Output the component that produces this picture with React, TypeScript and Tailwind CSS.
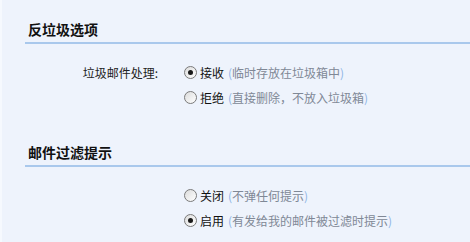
import React from 'react';

type Opt = { label: string; hint: string; checked: boolean };

function Radio({ checked }: { checked: boolean }) {
  return (
    <span className="relative inline-flex h-[13px] w-[13px] shrink-0 items-center justify-center rounded-full border border-[#7a7a7a] bg-gradient-to-br from-[#dcdcdc] to-white">
      {checked && <span className="h-[5px] w-[5px] rounded-full bg-[#1a1a1a]" />}
    </span>
  );
}

function Section({ title, label, options }: { title: string; label: string; options: Opt[] }) {
  return (
    <div>
      <div className="flex h-[24px] items-end border-b-2 border-[#a9c8ec] pb-[5px] pl-[3px]">
        <h2 className="text-[14px] font-bold leading-[16px] text-[#111]">{title}</h2>
      </div>
      <div className="flex pt-[16px]">
        <div className="w-[134px] pr-[1px] text-right text-[12px] leading-[25px] text-[#222]">{label}</div>
        <div className="ml-[25px] flex flex-col">
          {options.map((o) => (
            <label key={o.label} className="flex h-[25px] items-center text-[12px]">
              <Radio checked={o.checked} />
              <span className="ml-[3px] text-[#111]">{o.label}</span>
              <span className="ml-[4px] text-[#808896]">
                <span className="text-[#8fb5e6]">(</span>
                {o.hint}
                <span className="text-[#8fb5e6]">)</span>
              </span>
            </label>
          ))}
        </div>
      </div>
    </div>
  );
}

export default function App() {
  return (
    <div
      className="h-[242px] w-[470px] overflow-hidden border-l-2 border-[#f6f9fe] bg-[#eef3fc] pl-[23px] pt-[20px]"
      style={{ fontFamily: '"Noto Sans CJK SC", "Noto Sans", sans-serif' }}
    >
      <Section
        title="反垃圾选项"
        label="垃圾邮件处理:"
        options={[
          { label: '接收', hint: '临时存放在垃圾箱中', checked: true },
          { label: '拒绝', hint: '直接删除，不放入垃圾箱', checked: false },
        ]}
      />
      <div className="mt-[33px]">
        <Section
          title="邮件过滤提示"
          label=""
          options={[
            { label: '关闭', hint: '不弹任何提示', checked: false },
            { label: '启用', hint: '有发给我的邮件被过滤时提示', checked: true },
          ]}
        />
      </div>
    </div>
  );
}
